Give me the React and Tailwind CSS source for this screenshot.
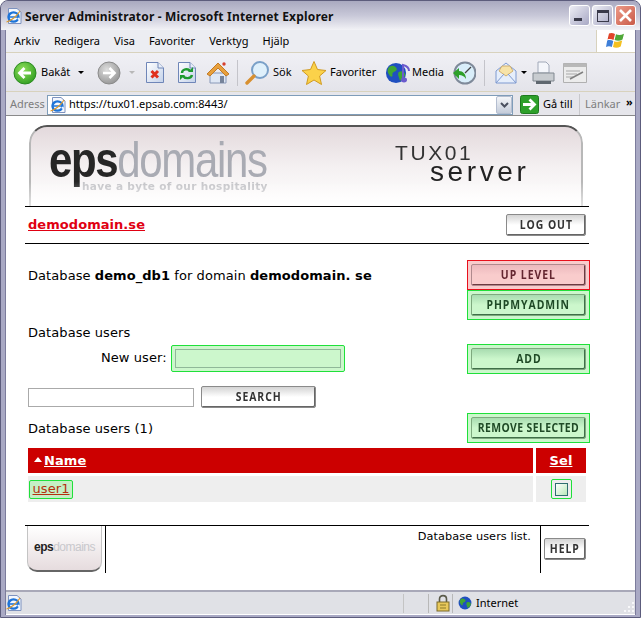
import React from "react";

const chrome = { fontFamily: '"Noto Sans","Liberation Sans",sans-serif' };

function DocBase({ children }) {
  return (
    <svg width="20" height="23" viewBox="0 0 20 23">
      <defs>
        <linearGradient id="docg" x1="0" y1="0" x2="1" y2="1">
          <stop offset="0" stopColor="#ffffff" />
          <stop offset="1" stopColor="#c4d2ea" />
        </linearGradient>
      </defs>
      <path d="M1.5 1.5H13L18.5 7V21.5H1.5Z" fill="url(#docg)" stroke="#6f86b8" />
      <path d="M13 1.5V7H18.5" fill="#e8eef8" stroke="#6f86b8" />
      {children}
    </svg>
  );
}

function ArrowCircle({ gray }) {
  const id = gray ? "cg" : "cb";
  return (
    <svg width="24" height="24" viewBox="0 0 24 24">
      <defs>
        <radialGradient id={id} cx="0.4" cy="0.35" r="0.75">
          <stop offset="0" stopColor={gray ? "#dedede" : "#8fe05a"} />
          <stop offset="1" stopColor={gray ? "#8f8f8f" : "#2b9a1e"} />
        </radialGradient>
      </defs>
      <circle cx="12" cy="12" r="11" fill={`url(#${id})`} stroke={gray ? "#8a8a8a" : "#2a8a20"} />
      {gray ? (
        <path d="M6 12H17M12.5 7L17.5 12L12.5 17" fill="none" stroke="#fff" strokeWidth="2.6" />
      ) : (
        <path d="M18 12H7M11.5 7L6.5 12L11.5 17" fill="none" stroke="#fff" strokeWidth="2.8" />
      )}
    </svg>
  );
}

function Globe({ size = 24 }) {
  return (
    <svg width={size} height={size} viewBox="0 0 24 24">
      <circle cx="12" cy="12" r="11" fill="#1f4fc0" />
      <path d="M5 5C9 3 12 5 13 8C12 11 9 10 8 13C9 17 6 17 4 13C2 10 3 7 5 5ZM15 11C19 9 22 11 22 14C21 18 18 21 16 20C16 17 13 14 15 11Z" fill="#3fa535" />
    </svg>
  );
}

function IeIcon({ size = 16 }) {
  return (
    <svg width={size} height={size} viewBox="0 0 16 16">
      <path d="M2.5 0.5H11L15 4V15.5H2.5Z" fill="#f4f7fd" stroke="#7d92bf" />
      <ellipse cx="7.5" cy="9" rx="5" ry="4.6" fill="none" stroke="#1e74d8" strokeWidth="2.4" />
      <path d="M3 9H12.5" stroke="#1e74d8" strokeWidth="1.6" />
      <path d="M12 11.5L13 10" stroke="#f4f7fd" strokeWidth="2" />
      <path d="M0.5 14C5 13 11 8 14 3" fill="none" stroke="#e09a2a" strokeWidth="1.1" />
    </svg>
  );
}

function WinBtn({ kind }) {
  const close = kind === "close";
  return (
    <div className={`flex h-[21px] w-[21px] items-center justify-center rounded-[3px] border border-white ${close ? "bg-gradient-to-br from-[#ec9a88] to-[#c95a48]" : "bg-gradient-to-br from-[#eeeef5] to-[#a8a8c4]"}`}>
      {kind === "min" && <div className="mt-[7px] mr-[4px] h-[3px] w-[8px] bg-[#3a3a4a]" />}
      {kind === "max" && <div className="h-[12px] w-[12px] border border-t-[3px] border-[#3a3a4a]" />}
      {close && (
        <svg width="15" height="15" viewBox="0 0 15 15">
          <path d="M2 2L13 13M13 2L2 13" stroke="#fff" strokeWidth="2.6" />
        </svg>
      )}
    </div>
  );
}

function Caret({ light, className = "" }) {
  return <div className={`h-0 w-0 border-x-[3px] border-t-[3px] border-x-transparent ${light ? "border-t-[#b8b8b8]" : "border-t-black"} ${className}`} />;
}

function Sep({ className = "" }) {
  return <div className={`h-[26px] w-px bg-[#c4c4ca] ${className}`} />;
}

function TbLabel({ children, className = "" }) {
  return <span className={`text-[11px] text-black ${className}`}>{children}</span>;
}

function Toolbar() {
  return (
    <div className="flex h-[38px] shrink-0 items-center bg-gradient-to-b from-[#f0f0f5] to-[#e4e4ea] pl-[7px] pt-[1px]" style={chrome}>
      <ArrowCircle />
      <TbLabel className="ml-[4px] w-[26px]">Bakåt</TbLabel>
      <Caret className="ml-[11px]" />
      <div className="ml-[13px]"><ArrowCircle gray /></div>
      <Caret light className="ml-[8px]" />
      <div className="ml-[10px]">
        <DocBase><path d="M6.5 10L13 16.5M13 10L6.5 16.5" stroke="#e0301e" strokeWidth="3" /></DocBase>
      </div>
      <div className="ml-[12px]">
        <DocBase>
          <path d="M5 12C5 8 11 7 13 10M15 14C14 18 8 18 6 15" fill="none" stroke="#1e9a30" strokeWidth="2.4" />
          <path d="M11 11H16V6ZM8 14H3V19Z" fill="#1e9a30" />
        </DocBase>
      </div>
      <div className="ml-[9px]">
        <svg width="24" height="24" viewBox="0 0 24 24">
          <path d="M4 12H20V22H4Z" fill="#dfe7f4" stroke="#8898b8" />
          <path d="M1 13L12 2L23 13L20 15L12 7L4 15Z" fill="#e8a03c" stroke="#c07a28" />
          <rect x="14" y="15" width="4" height="7" fill="#76839a" />
          <circle cx="18" cy="3" r="1.7" fill="#d6402e" />
        </svg>
      </div>
      <Sep className="ml-[7px]" />
      <div className="ml-[7px]">
        <svg width="25" height="25" viewBox="0 0 25 25">
          <circle cx="15" cy="10" r="8" fill="#dff0fb" stroke="#7aa0c8" strokeWidth="2" />
          <path d="M9 16L2 23" stroke="#d89030" strokeWidth="3.4" strokeLinecap="round" />
        </svg>
      </div>
      <TbLabel className="ml-[3px] w-[18px]">Sök</TbLabel>
      <div className="ml-[10px]">
        <svg width="26" height="26" viewBox="0 0 26 26">
          <path d="M13 1.5L16.5 9.5L25 10.5L18.6 16L20.5 24.5L13 20L5.5 24.5L7.4 16L1 10.5L9.5 9.5Z" fill="#fbd24a" stroke="#d09a20" />
        </svg>
      </div>
      <TbLabel className="ml-[3px] w-[44px]">Favoriter</TbLabel>
      <div className="ml-[11px] flex">
        <Globe size={22} />
        <svg width="10" height="22" viewBox="0 0 10 22" className="-ml-[6px]">
          <path d="M2 18V3C6 4 8 6 8 9" fill="none" stroke="#6a5acd" strokeWidth="2" />
          <ellipse cx="3" cy="18" rx="3" ry="2.4" fill="#6a5acd" />
        </svg>
      </div>
      <TbLabel className="ml-[1px] w-[28px]">Media</TbLabel>
      <div className="ml-[12px]">
        <svg width="24" height="24" viewBox="0 0 24 24">
          <circle cx="13" cy="12" r="10.5" fill="#d9eefa" stroke="#7f8a9a" strokeWidth="2" />
          <path d="M13 12L19 6" stroke="#444" strokeWidth="1.3" />
          <path d="M1 12L7 7V10C11 10 14 13 14 18C12 15 10 14 7 14V18Z" fill="#2ea02a" />
        </svg>
      </div>
      <Sep className="ml-[8px]" />
      <div className="ml-[10px]">
        <svg width="22" height="24" viewBox="0 0 22 24">
          <path d="M1 10L11 2L21 10V22H1Z" fill="#e6eefb" stroke="#7f9ad0" />
          <path d="M4 10L7 5H15L18 10L11 15Z" fill="#f7e3a8" stroke="#d0b070" />
          <path d="M1 22L9 13M21 22L13 13" stroke="#7f9ad0" />
        </svg>
      </div>
      <Caret className="ml-[4px]" />
      <div className="ml-[4px]">
        <svg width="25" height="24" viewBox="0 0 25 24">
          <path d="M7 1H15L18 4V12H7Z" fill="#f4f6fb" stroke="#a0a8b8" />
          <path d="M2 12H23V20H2Z" fill="#c8ccd0" stroke="#808890" />
          <path d="M5 20H20V23H5Z" fill="#5f676f" />
        </svg>
      </div>
      <div className="ml-[7px]">
        <svg width="24" height="20" viewBox="0 0 24 20">
          <path d="M0.5 0.5H23.5V19.5H0.5Z" fill="#ececec" stroke="#b0b0b0" />
          <path d="M0.5 0.5H23.5V4H0.5Z" fill="#b8b8b8" />
          <path d="M3 8H17M3 11H14M3 14H10" stroke="#a8a8a8" />
          <path d="M7 16L20 9" stroke="#808080" strokeWidth="1.5" />
        </svg>
      </div>
    </div>
  );
}

function AddressBar() {
  return (
    <div className="flex h-[23px] shrink-0 items-center bg-[#e6e6eb] pt-[2px] text-[11px]" style={chrome}>
      <span className="ml-[4px] w-[37px] text-[#7d7d7d]">Adress</span>
      <div className="flex h-[20px] w-[466px] items-center border border-[#7f9db9] bg-white">
        <div className="ml-[2px]"><IeIcon /></div>
        <span className="ml-[3px] flex-1 text-black">https://tux01.epsab.com:8443/</span>
        <div className="flex h-[18px] w-[16px] items-center justify-center rounded-[2px] border border-[#b4bed0] bg-gradient-to-b from-[#f4f6f9] to-[#c4ccda]">
          <svg width="9" height="6" viewBox="0 0 9 6"><path d="M1 1L4.5 4.5L8 1" fill="none" stroke="#4a5060" strokeWidth="2" /></svg>
        </div>
      </div>
      <div className="ml-[7px]">
        <svg width="19" height="19" viewBox="0 0 19 19">
          <rect x="0.5" y="0.5" width="18" height="18" rx="2" fill="#2ea02a" stroke="#1e7a1e" />
          <path d="M3 9.5H14M9.5 4.5L14.5 9.5L9.5 14.5" fill="none" stroke="#fff" strokeWidth="2.8" />
        </svg>
      </div>
      <span className="ml-[4px] w-[36px] text-black">Gå till</span>
      <div className="h-[21px] w-px bg-[#c8c8cc]" />
      <span className="ml-[5px] w-[41px] text-[#7d7d7d]">Länkar</span>
      <span className="-mt-[6px] text-[11px] font-bold leading-none text-black">»</span>
    </div>
  );
}

const btnFont = { fontFamily: '"Open Sans","Liberation Sans",sans-serif' };

function XpButton({ label, tone = "plain", className = "", text = "tracking-[1.2px]" }) {
  const tones = {
    plain: "border-[#8a8a8a] from-[#d4d4d4] via-white to-white text-[#333] shadow-[inset_-1px_-1px_0_#666]",
    green: "border-[#7ea97e] from-[#a8dcb0] via-[#ccf7cc] to-[#ccf7cc] text-[#1f4a26] shadow-[inset_-1px_-1px_0_#3f6f48]",
    red: "border-[#b08a8e] from-[#ecb9bd] via-[#f9cccc] to-[#f9cccc] text-[#642630] shadow-[inset_-1px_-1px_0_#6d3a40]",
  };
  return (
    <div className={`flex items-center justify-center overflow-hidden rounded-[2px] border bg-gradient-to-b text-[13px] font-bold ${tones[tone]} ${className}`} style={btnFont}>
      <span className={`inline-block shrink-0 scale-x-[0.8] whitespace-nowrap ${text}`}>{label}</span>
    </div>
  );
}

function Framed({ label, tone = "green", text }) {
  const border = tone === "red" ? "border-[#e8101c] bg-[#f9cccc]" : "border-[#1fe03a] bg-[#ccf7cc]";
  return (
    <div className={`flex h-[30px] w-[123px] items-center justify-center border ${border}`}>
      <XpButton label={label} tone={tone} text={text} className="h-[22px] w-[115px]" />
    </div>
  );
}

function Banner() {
  return (
    <div className="relative ml-[4px] h-[81px] w-[554px] rounded-t-[18px] border-x-2 border-t-2 border-t-[#555] border-x-[#b8b8b8] bg-gradient-to-b from-[#e3d9dc] via-[#f4f0f1] to-white [mask-image:linear-gradient(to_bottom,black_70%,rgba(0,0,0,0.4))]">
      <div className="absolute left-[18px] top-[10px] origin-left scale-x-[0.84] whitespace-nowrap text-[50px] leading-[46px] tracking-[-1.6px]" style={{ fontFamily: '"Liberation Sans",sans-serif' }}>
        <span className="font-bold text-[#262626]">eps</span>
        <span className="text-[#a9abb3]">domains</span>
      </div>
      <div className="absolute left-[51px] top-[54px] whitespace-nowrap text-[10.5px] font-bold leading-none tracking-[0.35px] text-[#c4c4c8]" style={{ fontFamily: '"DejaVu Sans",sans-serif' }}>
        have a byte of our hospitality
      </div>
      <div className="absolute left-[364px] top-[15px] text-[21px] leading-none tracking-[2.6px] text-[#333]" style={{ fontFamily: '"Liberation Sans",sans-serif' }}>TUX01</div>
      <div className="absolute left-[399px] top-[31px] text-[28px] leading-none tracking-[3.6px] text-[#222]" style={{ fontFamily: '"Liberation Sans",sans-serif' }}>server</div>
    </div>
  );
}

function Page() {
  return (
    <div className="h-[474px] shrink-0 bg-white pl-[19px] text-[13px] tracking-[0.07px] text-black" style={{ fontFamily: '"DejaVu Sans",sans-serif' }}>
      <div className="w-[565px] pt-[9px]">
        <Banner />
        <div className="flex h-[38px] w-[564px] items-center justify-between border-y border-black px-[3px]">
          <a className="font-bold tracking-[0.05px] text-[#e00012] underline">demodomain.se</a>
          <XpButton label="LOG OUT" className="h-[22px] w-[80px]" />
        </div>

        <div className="mt-[16px] flex justify-between">
          <div className="pl-[3px] pt-[6px]">
            Database <b>demo_db1</b> for domain <b>demodomain. se</b>
          </div>
          <div className="flex flex-col">
            <Framed label="UP LEVEL" tone="red" />
            <Framed label="PHPMYADMIN" />
          </div>
        </div>

        <div className="flex justify-between">
          <div className="pl-[3px] pt-[5px]">
            <div className="h-[19px] leading-[16px]">Database users</div>
            <div className="flex h-[28px] items-center">
              <span className="ml-[73px] w-[70px]">New user:</span>
              <div className="flex h-[27px] w-[174px] items-center justify-center rounded-[2px] border border-[#1fe03a] bg-[#ccf7cc]">
                <div className="h-[19px] w-[166px] border border-[#8fb898] bg-[#ccf7cc]" />
              </div>
            </div>
          </div>
          <div className="mt-[24px]"><Framed label="ADD" /></div>
        </div>

        <div className="mt-[12px] flex items-center pl-[3px]">
          <div className="h-[19px] w-[166px] border border-[#aaa] bg-white" />
          <XpButton label="SEARCH" className="ml-[7px] h-[22px] w-[115px]" />
        </div>

        <div className="mt-[5px] flex items-center justify-between">
          <div className="pl-[3px] pt-[1px]">Database users (1)</div>
          <Framed label="REMOVE SELECTED" text="tracking-[0.5px]" />
        </div>

        <div className="ml-[3px] mt-[5px] w-[558px]">
          <div className="flex h-[25px] gap-[3px]">
            <div className="flex w-[505px] items-center bg-[#cc0000] pl-[6px] font-bold text-white">
              <div className="mr-[2px] -mt-[3px] h-0 w-0 border-x-[4px] border-b-[5px] border-x-transparent border-b-white" />
              <span className="underline">Name</span>
            </div>
            <div className="flex flex-1 items-center justify-center bg-[#cc0000] font-bold text-white underline">Sel</div>
          </div>
          <div className="mt-[3px] flex h-[26px] gap-[3px]">
            <div className="flex w-[505px] items-center bg-[#eeeeee] pl-[1px]">
              <span className="flex h-[19px] w-[44px] items-center justify-center rounded-[2px] border border-[#1fe03a] bg-[#c5efc5] text-[#b5300e] underline">user1</span>
            </div>
            <div className="flex flex-1 items-center justify-center bg-[#eeeeee]">
              <div className="flex h-[20px] w-[21px] items-center justify-center rounded-[2px] border border-[#1fe03a]">
                <div className="h-[13px] w-[13px] border border-[#2f6f70] bg-gradient-to-br from-[#ffffff] to-[#b8e8b8]" />
              </div>
            </div>
          </div>
        </div>

        <div className="mt-[23px] flex h-[48px] w-[564px] border-t border-black">
          <div className="ml-[2px] h-[46px] w-[75px] overflow-hidden rounded-b-[10px] border-x border-b-2 border-x-[#c4c4c4] border-b-[#666] bg-gradient-to-b from-white to-[#e6dcde]">
            <div className="mt-[12px] whitespace-nowrap pl-[6px] text-[12px] tracking-[-0.5px]" style={{ fontFamily: '"Liberation Sans",sans-serif' }}>
              <span className="font-bold text-[#222]">eps</span><span className="text-[#c8c8cc]">domains</span>
            </div>
          </div>
          <div className="ml-[3px] h-[47px] w-px bg-black" />
          <div className="flex-1 pr-[9px] pt-[4px] text-right text-[11.3px] leading-[14px]">Database users list.</div>
          <div className="h-[47px] w-px bg-black" />
          <XpButton label="HELP" className="ml-[3px] mr-[3px] mt-[12px] h-[22px] w-[42px]" />
        </div>
      </div>
    </div>
  );
}

export default function App() {
  return (
    <div className="h-[618px] w-[641px] overflow-hidden bg-white">
      <div className="h-[618px] overflow-hidden rounded-t-[8px] border border-[#5c5c7c] bg-[#a9a9c4]">
        <div className="flex h-[29px] items-center bg-gradient-to-b from-[#a9a9c0] via-[#c8c8d8] to-[#f2f2f6] pl-[5px] pr-[4px]">
          <IeIcon size={16} />
          <span className="ml-[3px] flex-1 pt-[2px] text-[12px] font-bold tracking-[0.18px] text-[#111]" style={chrome}>Server Administrator - Microsoft Internet Explorer</span>
          <div className="flex gap-[2px]">
            <WinBtn kind="min" />
            <WinBtn kind="max" />
            <WinBtn kind="close" />
          </div>
        </div>
        <div className="mx-[4px] flex h-[585px] flex-col border-x border-[#7c7c9c] bg-white">
          <div className="flex h-[23px] shrink-0 items-stretch border-b border-[#d8d2bd] bg-[#ecedf2] text-[11px] text-black" style={chrome}>
            <div className="flex flex-1 items-center gap-[14px] pl-[8px]">
              <span>Arkiv</span><span>Redigera</span><span>Visa</span><span>Favoriter</span><span>Verktyg</span><span>Hjälp</span>
            </div>
            <div className="flex w-[39px] items-center justify-center border-l border-[#d8d2bd] bg-white">
              <svg width="20" height="18" viewBox="0 0 20 18">
                <path d="M3 1.5C5 0.5 7 1 9 2L7.5 8C5.5 7 3.5 6.7 1.5 7.5Z" fill="#e0452a" />
                <path d="M10 2.2C12 3.2 15 3.2 18 1.7L16.5 7.5C14 9 11 9 8.6 8Z" fill="#50a838" />
                <path d="M1.2 8.5C3 7.8 5.5 8 7.3 9L5.8 15C4 14 2 14 0 15Z" fill="#3f7fd8" />
                <path d="M8.3 9.2C10.5 10 13.5 10 16.2 8.6L14.7 14.5C12 16 9 16 7 15Z" fill="#f4c020" />
              </svg>
            </div>
          </div>
          <Toolbar />
          <div className="h-px shrink-0 bg-[#d8d2bd]" />
          <AddressBar />
          <div className="h-px shrink-0 bg-[#8a8a8a]" />
          <Page />
          <div className="flex h-[24px] shrink-0 items-center border-t-2 border-[#a8a8b8] bg-[#e0e1e6] text-[11px]" style={chrome}>
            <IeIcon size={16} />
            <div className="ml-[381px] h-[19px] w-px bg-[#c4c4c4]" />
            <div className="ml-[24px] h-[19px] w-px bg-[#b8b8b8]" />
            <div className="ml-[7px]">
              <svg width="14" height="18" viewBox="0 0 14 18">
                <path d="M3.5 8V5C3.5 0.5 10.5 0.5 10.5 5V8" fill="none" stroke="#5a5a4a" strokeWidth="1.6" />
                <rect x="1" y="8" width="12" height="9" fill="#e8c85a" stroke="#7a6a2a" />
                <path d="M4 11H10M4 14H10" stroke="#8a7a2a" />
              </svg>
            </div>
            <div className="ml-[2px] h-[19px] w-px bg-[#b8b8b8]" />
            <div className="ml-[5px]"><Globe size={14} /></div>
            <span className="ml-[4px] flex-1 text-black">Internet</span>
            <svg width="11" height="11" viewBox="0 0 11 11" className="mt-[8px]">
              <path d="M8 0h2v2H8ZM4 4h2v2H4ZM8 4h2v2H8ZM0 8h2v2H0ZM4 8h2v2H4ZM8 8h2v2H8Z" fill="#f8f8fa" />
            </svg>
          </div>
        </div>
      </div>
    </div>
  );
}
